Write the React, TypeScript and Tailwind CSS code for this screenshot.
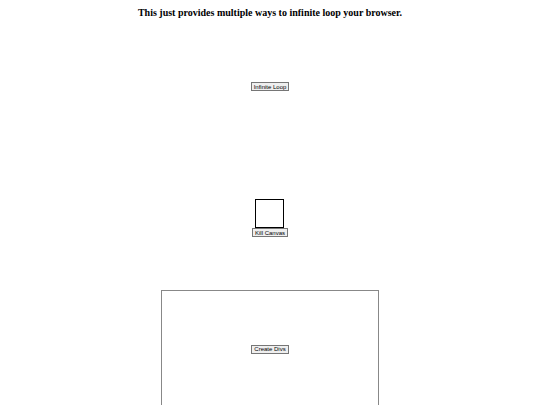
import React from 'react';

function TinyButton({ label }: { label: string }) {
  return (
    <button
      type="button"
      className="flex h-[9px] items-center border border-[#767676] bg-[#efefef] px-[2px] font-['Liberation_Sans',Arial,sans-serif] text-[6px] leading-none text-black"
    >
      {label}
    </button>
  );
}

export default function App() {
  return (
    <div className="flex min-h-[405px] w-[540px] flex-col items-center overflow-hidden bg-white">
      <h1 className="mt-[7px] font-['Liberation_Serif','Times_New_Roman',serif] text-[10px] font-bold leading-[12px] text-black">
        This just provides multiple ways to infinite loop your browser.
      </h1>

      <div className="mt-[63px]">
        <TinyButton label="Infinite Loop" />
      </div>

      <div className="mt-[108px] flex flex-col items-center">
        <div className="h-[29px] w-[29px] border border-black bg-white" />
        <TinyButton label="Kill Canvas" />
      </div>

      <div className="mt-[53px] flex h-[118px] w-[218px] items-center justify-center border border-[#888888]">
        <TinyButton label="Create Divs" />
      </div>
    </div>
  );
}
